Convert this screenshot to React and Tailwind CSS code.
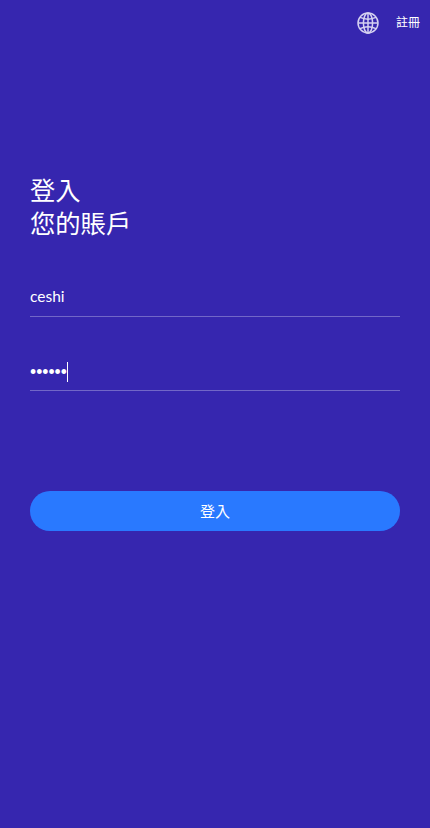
const FONT = "font-['Lato','Noto_Sans_CJK_TC',sans-serif]"

function GlobeIcon() {
  return (
    <svg width="24" height="24" viewBox="0 0 24 24" fill="none" stroke="#d5d1f0" strokeWidth="1.5">
      <circle cx="12" cy="12" r="10" />
      <ellipse cx="12" cy="12" rx="4.6" ry="10" />
      <path d="M12 2v20" />
      <path d="M2 12h20" />
      <path d="M4 6.4c4.6 2 11.4 2 16 0" />
      <path d="M4 17.6c4.6-2 11.4-2 16 0" />
    </svg>
  )
}

export default function App() {
  return (
    <div className={`${FONT} min-h-[828px] w-full bg-[#3626af] text-white flex flex-col`}>
      <header className="h-[46px] flex items-center justify-end pr-[10px] gap-[16px]">
        <GlobeIcon />
        <a className="text-xs w-[24px]">註冊</a>
      </header>

      <main className="px-[30px] pt-[128px]">
        <h1 className="text-[25.3px] leading-[33px] font-normal">
          登入
          <br />
          您的賬戶
        </h1>

        <form className="mt-[31px]">
          <div className="h-[46px] flex items-end border-b border-white/30 pb-[10px]">
            <input
              readOnly
              value="ceshi"
              className="w-full bg-transparent outline-none text-[15.5px] leading-[20px] text-white"
            />
          </div>

          <div className="mt-[28px] h-[46px] flex items-end border-b border-white/30 pb-[8px]">
            <input
              readOnly
              type="password"
              value="123456"
              className="w-[37px] h-[20px] bg-transparent outline-none text-[17.5px] font-['Liberation_Sans'] text-white"
            />
            <div className="h-[20px] w-px bg-white" />
          </div>

          <button
            type="button"
            className="mt-[100px] w-full h-[40px] rounded-full bg-[#2979ff] text-[15px] text-white"
          >
            登入
          </button>
        </form>
      </main>
    </div>
  )
}
